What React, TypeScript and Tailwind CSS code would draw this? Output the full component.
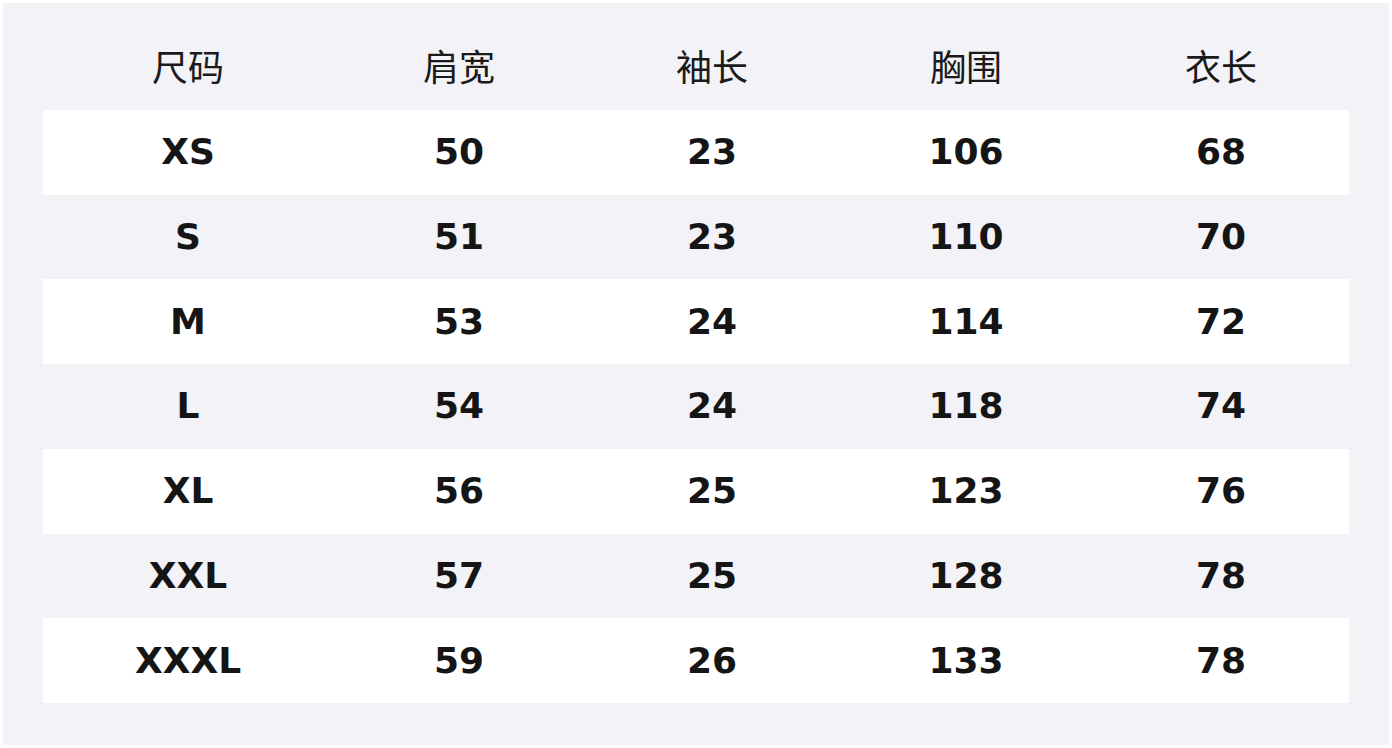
import React from "react";

const headers = ["尺码", "肩宽", "袖长", "胸围", "衣长"];
const rows = [
  ["XS", "50", "23", "106", "68"],
  ["S", "51", "23", "110", "70"],
  ["M", "53", "24", "114", "72"],
  ["L", "54", "24", "118", "74"],
  ["XL", "56", "25", "123", "76"],
  ["XXL", "57", "25", "128", "78"],
  ["XXXL", "59", "26", "133", "78"],
];
const widths = ["w-[290px]", "w-[252px]", "w-[254px]", "w-[254px]", "w-[256px]"];

export default function App() {
  return (
    <div className="w-[1392px] h-[748px] bg-white p-[3px]">
      <div className="w-[1386px] h-[742px] bg-[#f2f2f7] px-[40px] pt-[40px]">
        <div className="flex h-[67px] pb-[24px] items-center">
          {headers.map((h, i) => (
            <div
              key={h}
              className={`${widths[i]} text-center text-[36px] leading-none text-[#1a1a1a] font-['Noto_Sans_CJK_SC',sans-serif]`}
            >
              {h}
            </div>
          ))}
        </div>
        {rows.map((r, ri) => (
          <div
            key={r[0]}
            className={`flex items-center h-[84.714px] ${ri % 2 === 0 ? "bg-white" : "bg-[#f2f2f7]"}`}
          >
            {r.map((c, i) => (
              <div
                key={i}
                className={`${widths[i]} text-center text-[36px] leading-none font-bold text-[#151515] font-['DejaVu_Sans',sans-serif]`}
              >
                {c}
              </div>
            ))}
          </div>
        ))}
      </div>
    </div>
  );
}
